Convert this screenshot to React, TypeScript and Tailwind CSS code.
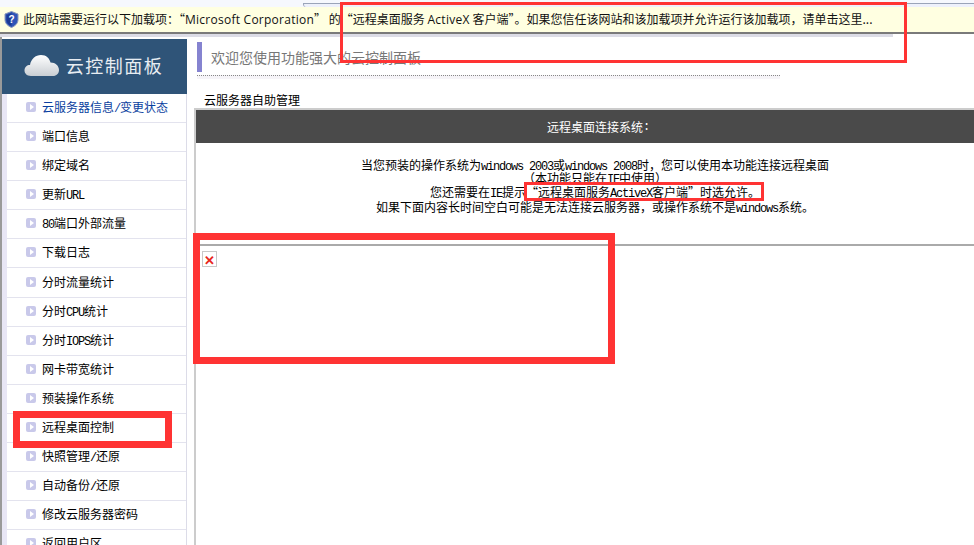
const cjk = { fontFamily: '"Noto Sans CJK SC", sans-serif' };
const segoe = { fontFamily: '"Open Sans", sans-serif' };

const menu = [
  "云服务器信息/变更状态",
  "端口信息",
  "绑定域名",
  "更新URL",
  "80端口外部流量",
  "下载日志",
  "分时流量统计",
  "分时CPU统计",
  "分时IOPS统计",
  "网卡带宽统计",
  "预装操作系统",
  "远程桌面控制",
  "快照管理/还原",
  "自动备份/还原",
  "修改云服务器密码",
  "返回用户区",
];

const Shield = () => (
  <svg width="15" height="17" viewBox="0 0 15 17" className="shrink-0">
    <path d="M7.5 0.5 L14 3 V8.5 C14 12.5 11 15 7.5 16.5 C4 15 1 12.5 1 8.5 V3 Z" fill="#2f55b8" stroke="#8a97b8" />
    <path d="M7.5 2 V15 C5 14 2.5 12 2.5 8.5 V4 Z" fill="#1c3a94" />
    <text x="7.5" y="12" textAnchor="middle" fontSize="10" fontWeight="700" fill="#fff" fontFamily="Liberation Sans, sans-serif">?</text>
  </svg>
);

const Cloud = () => (
  <svg width="36" height="26" viewBox="0 0 36 26">
    <defs>
      <linearGradient id="cloud" x1="0" y1="0" x2="0" y2="1">
        <stop offset="0" stopColor="#ffffff" />
        <stop offset="1" stopColor="#c9ced3" />
      </linearGradient>
    </defs>
    <path
      d="M7 24 C2.5 24 0.5 21 0.5 18.5 C0.5 15 3 13 6 13 C7 7 11.5 3 17 3 C22.5 3 25.5 6.5 26.5 10.5 C31.5 10.5 35 14 35 18 C35 21.5 32.5 24 29 24 Z"
      fill="url(#cloud)"
    />
  </svg>
);

const Bullet = () => (
  <span className="flex h-[10px] w-[10px] shrink-0 items-center justify-center rounded-[2px] bg-[#c9c9ea]">
    <span className="ml-px h-0 w-0 border-y-[3px] border-l-[4px] border-y-transparent border-l-white" />
  </span>
);

// half-width latin run, like the SimSun latin glyphs: 6px per character
const Latin = ({ children }: { children: string }) => (
  <span className="whitespace-pre text-[12px] leading-[12px] tracking-[-1.2px]" style={{ fontFamily: '"Liberation Mono", monospace' }}>
    {children}
  </span>
);

// menu labels mix CJK with half-width latin runs
const Label = ({ text }: { text: string }) => (
  <span className="whitespace-nowrap">
    {text.split(/([A-Za-z0-9/]+)/).map((part, i) => (i % 2 ? <Latin key={i}>{part}</Latin> : part))}
  </span>
);

export default function App() {
  return (
    <div className="relative flex h-[545px] w-[974px] flex-col overflow-hidden bg-white text-xs text-black" style={cjk}>
      {/* browser chrome strip */}
      <div className="flex h-[7px] shrink-0 bg-[#f6f8fd]">
        <div className="w-[303px]" />
        <div className="mt-[3px] flex-1 rounded-bl-[3px] border-t border-l border-[#9aa4b8] bg-[#eef1fb]" />
      </div>

      {/* IE info bar */}
      <div className="flex h-[27px] shrink-0 items-center gap-[4px] border-b-2 border-b-[#7a7a7a] bg-[#ffffe1] pl-[4px] pb-[1px] text-[12px] text-[#111]">
        <Shield />
        <span className="whitespace-nowrap">
          此网站需要运行以下加载项：“<span className="tracking-[0.25px]" style={segoe}>Microsoft Corporation</span>” 的“远程桌面服务 <span className="tracking-[0.3px]" style={segoe}>ActiveX</span> 客户端”。如果您信任该网站和该加载项并允许运行该加载项，请单击这里...
        </span>
      </div>
      <div className="h-[3px] w-[893px] shrink-0 bg-[#dcdce6]" />

      <div className="flex min-h-0 flex-1 border-l-2 border-l-[#9a9a9a]">
        {/* sidebar */}
        <aside className="mt-[2px] flex w-[185px] shrink-0 flex-col">
          <div className="flex h-[55px] shrink-0 items-center justify-center gap-[6px] bg-[#2f5478] pr-[2px] pb-[4px]">
            <Cloud />
            <span className="text-[18px] tracking-[1.5px] text-[#e8edf2]">云控制面板</span>
          </div>
          <ul className="border-r border-r-[#dcdce8] border-l-[5px] border-l-[#e8e6f5]">
            {menu.map((label, i) => (
              <li
                key={label}
                className={`flex h-[29px] items-center gap-[6px] border-b border-b-[#e3e3ee] pb-[2px] pl-[19px] ${i === 0 ? "text-[#0b3fa0]" : ""} ${i === 6 ? "mt-px" : ""}`}
              >
                <Bullet />
                <Label text={label} />
              </li>
            ))}
          </ul>
        </aside>

        {/* main content */}
        <main className="ml-[7px] flex w-[806px] shrink-0 flex-col">
          <div className="mt-[5px] ml-[3px] flex h-[30px] w-[583px] items-center border-l-[5px] border-l-[#8583d0] pl-[9px] text-[14px] text-[#777]">
            欢迎您使用功能强大的云控制面板
          </div>
          <div className="mt-[3px] ml-[3px] h-[4px] w-[583px] border-t border-dotted border-t-[#888] bg-[#f6f4f8]" />
          <div className="mt-[13px] h-[16px] pl-[10px] leading-[16px]">云服务器自助管理</div>
          <div className="flex flex-1 flex-col border-t-2 border-l-2 border-t-[#ccc] border-l-[#ccc]">
            <div className="flex h-[33px] items-center justify-center bg-[#4a4a4a] text-white">
              <span>远程桌面连接系统</span>
              <Latin>:</Latin>
            </div>
            <div className="h-[103px] border-b-2 border-b-[#aaa] pt-[16px] pr-[6px] leading-[12px]">
              <p className="flex h-[13px] items-baseline justify-center">
                当您预装的操作系统为<Latin>windows 2003</Latin>或<Latin>windows 2008</Latin>时，您可以使用本功能连接远程桌面
              </p>
              <p className="flex h-[14px] items-baseline justify-center">
                （本功能只能在<Latin>IE</Latin>中使用）
              </p>
              <p className="flex h-[15px] items-baseline justify-center">
                您还需要在<Latin>IE</Latin>提示“远程桌面服务<Latin>ActiveX</Latin>客户端”时选允许。
              </p>
              <p className="flex h-[14px] items-baseline justify-center">
                如果下面内容长时间空白可能是无法连接云服务器，或操作系统不是<Latin>windows</Latin>系统。
              </p>
            </div>
            <div className="pl-[6px] pt-[5px]">
              <span className="flex h-[16px] w-[15px] items-center justify-center border border-[#c8c8c8] text-[13px] font-bold leading-none text-[#e8261c]">✕</span>
            </div>
          </div>
        </main>
      </div>

      {/* red annotation boxes drawn over the screenshot */}
      <div className="absolute left-[340px] top-[2px] h-[61px] w-[567px] border-[3px] border-[#ff3333]" />
      <div className="absolute left-[524px] top-[182px] h-[19px] w-[240px] border-[3px] border-[#ff3333]" />
      <div className="absolute left-[193px] top-[233px] h-[131px] w-[422px] border-[7px] border-[#ff3333]" />
      <div className="absolute left-[13px] top-[411px] h-[37px] w-[159px] border-[7px] border-[#ff3333]" />
    </div>
  );
}
